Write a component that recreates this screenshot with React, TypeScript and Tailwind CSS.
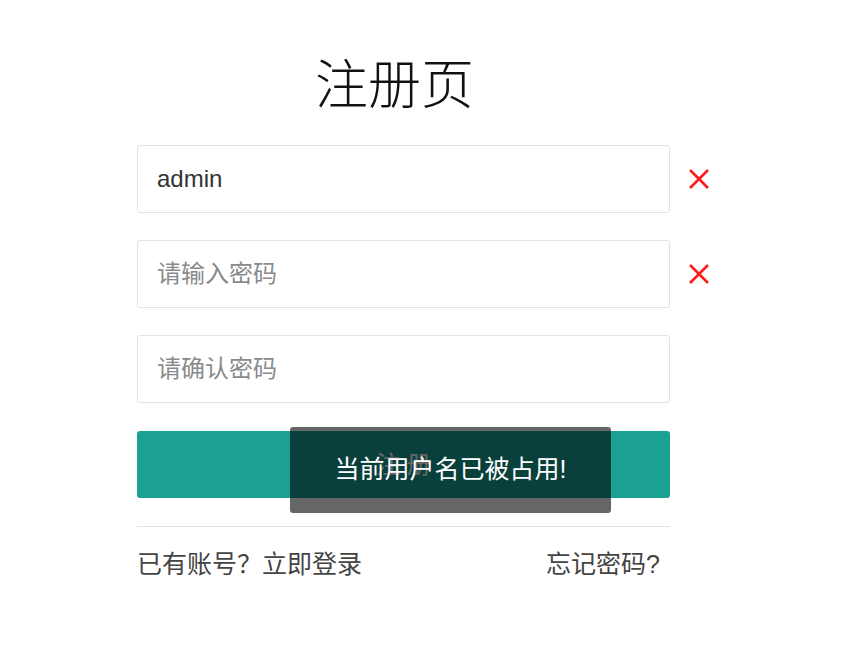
import React from 'react';

const font = { fontFamily: '"Liberation Sans", "Noto Sans CJK SC", sans-serif' };

function RedX() {
    return (
        <svg width="22" height="22" viewBox="0 0 22 22" className="shrink-0">
            <path d="M2 2 L20 20 M20 2 L2 20" stroke="#ff1a1a" strokeWidth="2.6" strokeLinecap="butt" />
        </svg>
    );
}

function Field({ value, placeholder, error }: { value?: string; placeholder: string; error?: boolean }) {
    return (
        <div className="flex items-center">
            <input
                defaultValue={value}
                placeholder={placeholder}
                className="shrink-0 box-border w-[533px] h-[68px] border border-[#e3e3e3] rounded-[3px] px-[19px] text-[24px] text-[#333] placeholder:text-[#8a8a8a] outline-none bg-white"
                style={font}
            />
            {error && <div className="ml-[18px] flex items-center"><RedX /></div>}
        </div>
    );
}

export default function App() {
    return (
        <div className="w-[865px] h-[661px] bg-white relative" style={font}>
            <div className="ml-[137px] w-[533px] flex flex-col">
                <h1 className="text-center text-[53px] leading-none font-light text-[#111] pt-[59px] pr-[18px]">注册页</h1>
                <div className="mt-[33px] flex flex-col gap-[27px]">
                    <Field value="admin" placeholder="请输入用户名" error />
                    <Field placeholder="请输入密码" error />
                    <Field placeholder="请确认密码" />
                </div>
                <button className="mt-[28px] h-[67px] w-[533px] rounded-[3px] bg-[#1aa194] text-white text-[24px]">
                    注 册
                </button>
                <div className="mt-[28px] border-t border-[#e3e3e3]" />
                <div className="mt-[21px] flex justify-between text-[25px] leading-[32px] text-[#444] pr-[10px]">
                    <span>已有账号？立即登录</span>
                    <span>忘记密码?</span>
                </div>
            </div>
            {/* toast */}
            <div className="absolute left-[290px] top-[427px] w-[321px] h-[86px] rounded-[3px] bg-black/60 flex items-center justify-center text-white text-[25px] pb-[1px]">
                当前用户名已被占用!
            </div>
        </div>
    );
}
